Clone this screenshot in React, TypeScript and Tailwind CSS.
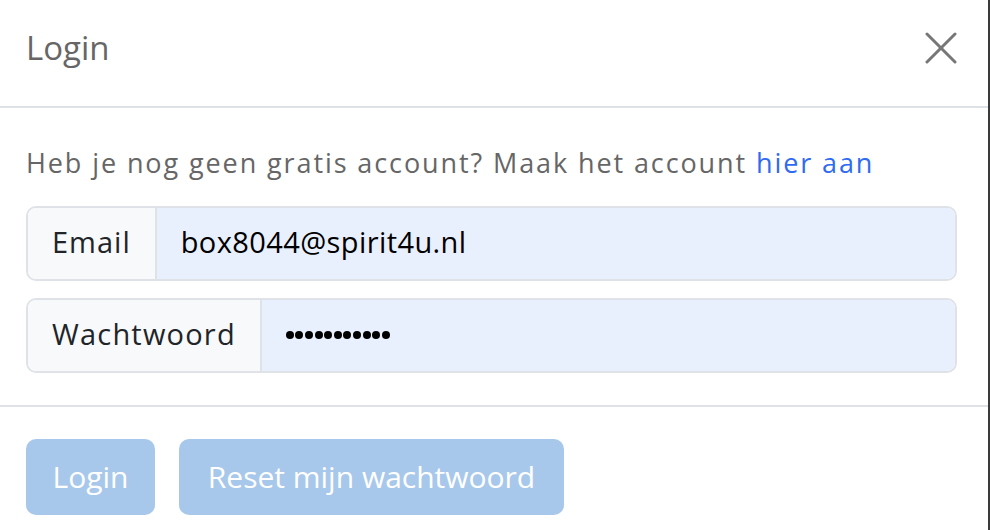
export default function App() {
  const dots = Array.from({ length: 11 });
  return (
    <div
      className="w-[990px] h-[530px] bg-white border-r-2 border-[#3a3a3a] overflow-hidden"
      style={{ fontFamily: "'Open Sans', Lato, sans-serif" }}
    >
      <div className="h-[108px] flex items-center justify-between pl-[26px] pr-[31px] border-b-2 border-[#dee2e6]">
        <h5 className="text-[33px] text-[#666666] leading-none -mt-[12px]">Login</h5>
        <button className="-mt-[10px]">
          <svg width="32" height="32" viewBox="0 0 32 32" stroke="#777777" strokeWidth="3" strokeLinecap="round">
            <line x1="2" y1="2" x2="30" y2="30" />
            <line x1="30" y1="2" x2="2" y2="30" />
          </svg>
        </button>
      </div>

      <div className="pl-[26px] pr-[31px] pt-[36px] pb-[32px] border-b-2 border-[#dee2e6]">
        <p className="text-[27px] text-[#666666] leading-[38px] tracking-[1.9px]">
          Heb je nog geen gratis account? Maak het account{" "}
          <a href="#" className="text-[#2f6bf0]">hier aan</a>
        </p>

        <div className="mt-[24px] flex h-[75px] rounded-[10px] border-2 border-[#dfe2e6] overflow-hidden">
          <span className="flex items-center px-[24px] pb-[4px] bg-[#f8f9fa] border-r-2 border-[#dfe2e6] text-[29px] tracking-[1px] text-[#212529]">
            Email
          </span>
          <div className="flex-1 flex items-center px-[24px] pb-[4px] bg-[#e8f0fe] text-[29px] tracking-[0.4px] text-black">
            box8044@spirit4u.nl
          </div>
        </div>

        <div className="mt-[17px] flex h-[75px] rounded-[10px] border-2 border-[#dfe2e6] overflow-hidden">
          <span className="flex items-center px-[24px] pb-[4px] bg-[#f8f9fa] border-r-2 border-[#dfe2e6] text-[29px] tracking-[1.2px] text-[#212529]">
            Wachtwoord
          </span>
          <div className="flex-1 flex items-center gap-[1.6px] px-[24px] pb-[2px] bg-[#e8f0fe]">
            {dots.map((_, i) => (
              <span key={i} className="w-[8px] h-[8px] rounded-full bg-black" />
            ))}
          </div>
        </div>
      </div>

      <div className="px-[26px] pt-[32px] flex gap-[24px]">
        <button className="h-[76px] w-[129px] rounded-[10px] bg-[#a8c8eb] text-white text-[30px] pb-[2px]">
          Login
        </button>
        <button className="h-[76px] w-[385px] rounded-[10px] bg-[#a8c8eb] text-white text-[30px] pb-[2px]">
          Reset mijn wachtwoord
        </button>
      </div>
    </div>
  );
}
